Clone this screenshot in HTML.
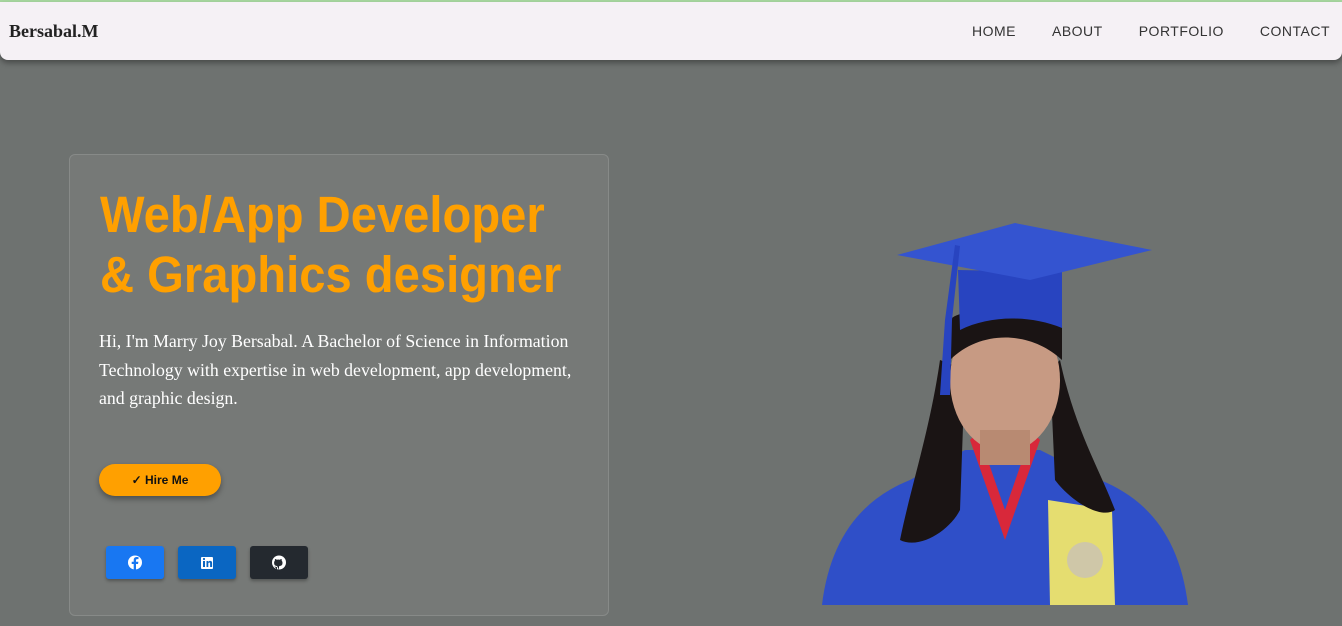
<!DOCTYPE html>
<html><head><style>
*{margin:0;padding:0;box-sizing:border-box}
body{width:1342px;height:626px;overflow:hidden;background:#6e7270;font-family:"Liberation Sans",sans-serif;position:relative}
.top{position:absolute;left:0;top:0;width:1342px;height:2px;background:#a8d8a0}
nav{position:absolute;left:0;top:2px;width:1342px;height:58px;background:#f5f1f5;border-radius:0 0 8px 8px;box-shadow:0 3px 6px rgba(0,0,0,.35)}
.brand{position:absolute;left:9px;top:19px;font:bold 18px "Liberation Serif",serif;color:#222}
.links{position:absolute;right:12px;top:21px;font-size:14px;letter-spacing:.5px;color:#333}
.links span{margin-left:36px}
.card{position:absolute;left:69px;top:154px;width:540px;height:462px;background:#767977;border:1px solid #878a88;border-radius:6px}
h1{position:absolute;left:30px;top:30px;color:#ffa000;font-size:51px;line-height:60px;font-weight:bold;white-space:nowrap;transform:scaleX(.925);transform-origin:0 0}
p{position:absolute;left:29px;top:172px;width:490px;font:17.8px/28.5px "Liberation Serif",serif;color:#fff}
.hire{position:absolute;left:29px;top:309px;width:122px;height:32px;border-radius:16px;background:#ffa000;box-shadow:0 3px 6px rgba(0,0,0,.35);font-size:12px;font-weight:bold;color:#111;text-align:center;line-height:32px}
.soc{position:absolute;top:391px;width:58px;height:33px;border-radius:3px;box-shadow:0 2px 3px rgba(0,0,0,.3)}
</style></head><body>
<div class="top"></div>
<nav><div class="brand">Bersabal.M</div><div class="links"><span>HOME</span><span>ABOUT</span><span>PORTFOLIO</span><span>CONTACT</span></div></nav>
<div class="card">
<h1>Web/App Developer<br>&amp; Graphics designer</h1>
<p>Hi, I'm Marry Joy Bersabal. A Bachelor of Science in Information Technology with expertise in web development, app development, and graphic design.</p>
<div class="hire">✓ Hire Me</div>
<div class="soc" style="left:36px;background:#1877f2"><svg width="58" height="33"><circle cx="29" cy="16.5" r="7" fill="#fff"/><path d="M30 24v-6h2l.4-2.3H30v-1.4c0-.7.3-1.2 1.2-1.2h1.3v-2a12 12 0 0 0-1.8-.1c-1.9 0-3 1.1-3 3.1v1.6h-2V18h2v6z" fill="#1877f2"/></svg></div>
<div class="soc" style="left:108px;background:#0a66c2"><svg width="58" height="33"><rect x="23" y="11" width="12" height="12" rx="1" fill="#fff"/><rect x="25" y="15" width="2" height="6" fill="#0a66c2"/><circle cx="26" cy="13" r="1.1" fill="#0a66c2"/><path d="M28.5 15h1.8v1c.5-.8 1.2-1.1 2-1.1 1.3 0 1.8.9 1.8 2.2V21h-2v-3.5c0-.6-.2-1-.8-1s-1 .4-1 1.1V21h-1.8z" fill="#0a66c2"/></svg></div>
<div class="soc" style="left:180px;background:#24292f"><svg width="58" height="33"><circle cx="29" cy="16.5" r="7" fill="#fff"/><path d="M27 24v-3c-1.5.2-2.5-.8-3-1.5m5 4.5v-3c0-.8.5-1 .5-1 2-.3 3-1 3-3.3 0-.8-.3-1.5-.8-2 .1-.5.1-1.2-.2-1.7-.6 0-1.3.4-1.7.7a6 6 0 0 0-3 0c-.4-.3-1.1-.7-1.7-.7-.3.5-.3 1.2-.2 1.7-.5.5-.8 1.2-.8 2 0 2.3 1 3 3 3.3" fill="#24292f"/></svg></div>
</div>
<svg style="position:absolute;left:800px;top:210px" width="420" height="400">
<path d="M22 395 C30 330 60 290 110 270 L165 240 L240 240 L300 270 C350 290 380 330 388 395 Z" fill="#2f4fc8"/>
<path d="M170 230 L205 330 L240 230 L232 222 L205 300 L178 222Z" fill="#d8283a"/>
<path d="M248 290 L312 300 L315 395 L250 395Z" fill="#e5dd70"/>
<circle cx="285" cy="350" r="18" fill="#cfc7a8"/>
<path d="M140 150 C130 220 110 280 100 330 C120 340 150 320 160 300 L165 160Z" fill="#1a1414"/>
<path d="M260 150 C275 220 300 260 315 300 C300 310 270 290 255 270 L250 160Z" fill="#1a1414"/>
<ellipse cx="205" cy="170" rx="55" ry="72" fill="#c79a83"/>
<rect x="180" y="220" width="50" height="35" fill="#b88a72"/>
<path d="M150 110 C160 95 250 95 262 112 L262 150 C230 120 180 120 150 150Z" fill="#1a1414"/>
<path d="M158 60 L160 120 C190 105 230 105 262 118 L262 62Z" fill="#2844c0"/>
<path d="M97 45 L215 13 L352 40 L230 70Z" fill="#3454d0"/>
<path d="M155 35 L145 110 L140 185 L150 185 L152 110 L160 36Z" fill="#2844c0"/>
</svg>
</body></html>
